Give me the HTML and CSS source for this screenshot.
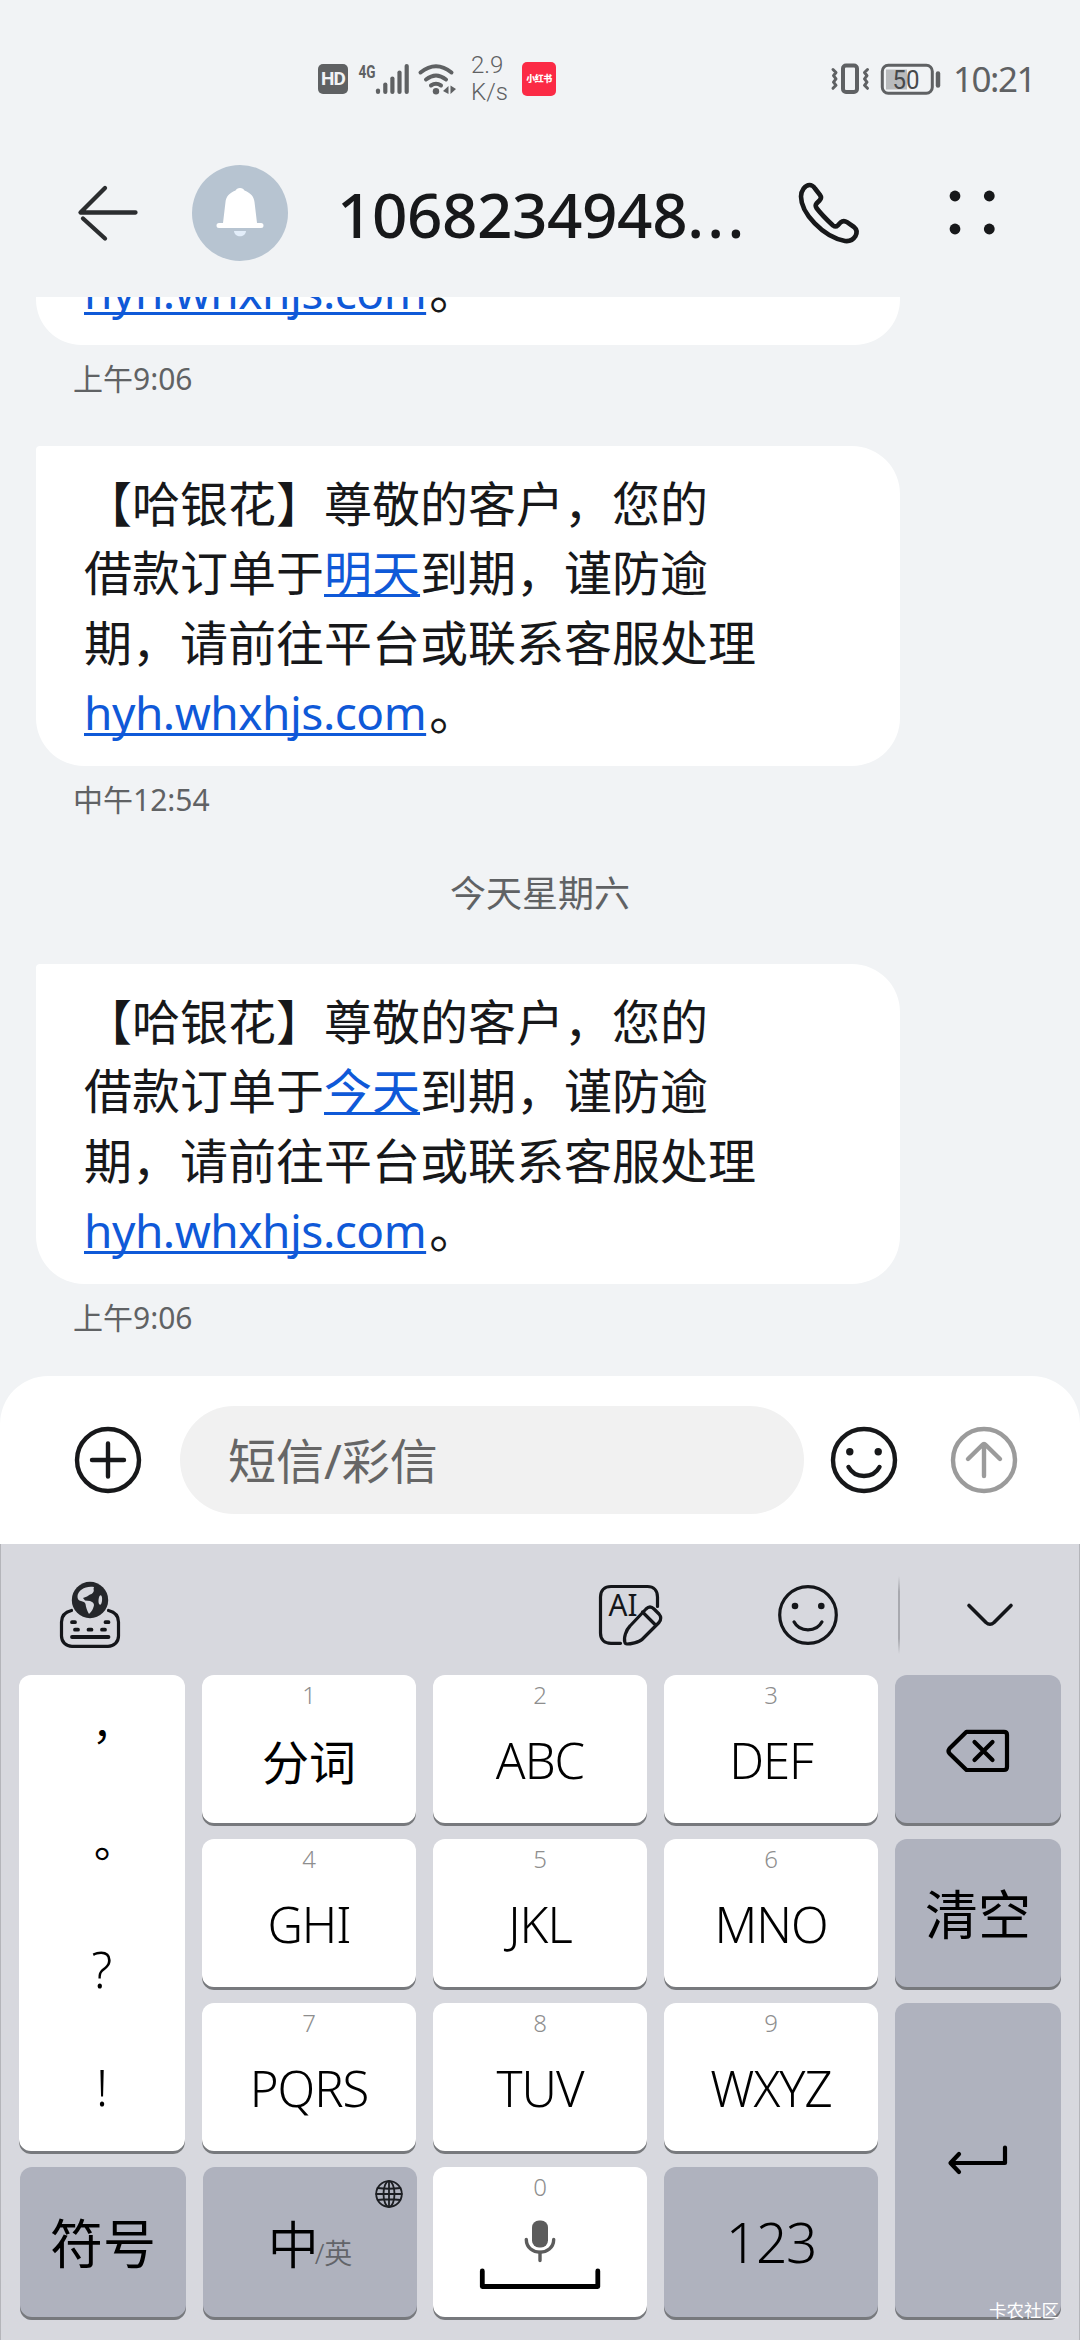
FILE: index.html
```html
<!DOCTYPE html>
<html lang="zh-CN">
<head>
<meta charset="utf-8">
<title>短信</title>
<link rel="stylesheet" href="styles.css">
</head>
<body>
<div class="status">
  <div class="status-left">
    <span class="hd">HD</span>
    <svg class="signal" width="54" height="34" viewBox="357 61 54 34">
      <text class="net" x="358.500" y="76.500" textLength="17" lengthAdjust="spacingAndGlyphs">4G</text>
      <g class="bars"><path d="M378 89.500V91"/><path d="M385.300 83.500V91"/><path d="M392.400 77.500V91"/><path d="M399.500 71.500V91"/><path d="M406.700 65V91"/></g>
    </svg>
    <svg class="wifi" width="40" height="34" viewBox="417 61 40 34">
      <path d="M420.500 71.500Q436 59 451.500 71.500M426 78.500Q436 70.500 446 78.500M431 84.500Q436 81 441 84.500"/>
      <circle cx="436" cy="90.300" r="3.200"/>
      <path class="tri" d="M448.500 85V93L443 90ZM450.500 84.500L456 88L450.500 93Z"/>
    </svg>
    <div class="speed"><span>2.9</span><span>K/s</span></div>
    <span class="redapp">小红书</span>
  </div>
  <div class="status-right">
    <svg width="110" height="34" viewBox="830 61 110 34">
      <rect class="line4" x="842" y="64.500" width="14" height="26.500" rx="3"/>
      <path class="zig" d="M832 68.500l3 3-2.500 3.200 2.500 3.200-2.500 3.200 2.500 3.200-3 3M866.500 68.500l-3 3 2.500 3.200-2.500 3.200 2.500 3.200-2.500 3.200 3 3"/>
      <rect class="fill" x="885" y="68.500" width="21" height="20"/>
      <rect class="line3" x="881.300" y="64.300" width="50" height="28" rx="6"/>
      <path class="nub" d="M937 72.500V84.500"/>
      <text class="pct" x="891.500" y="87.500" textLength="27" lengthAdjust="spacingAndGlyphs">50</text>
    </svg>
    <span class="clock">10:21</span>
  </div>
</div>

<header class="header">
  <svg class="back" width="64" height="60" viewBox="76 183 64 60"><path d="M105 188L80.500 212.500H135.500M83 218.500L105 238.500"/></svg>
  <div class="avatar"><svg width="50" height="54" viewBox="0 0 50 54">
    <path class="bell" d="M25 2C27.500 2 28.500 3 29.500 4.500C36 7 39 11 39.500 16L42 37H46A2.500 2.500 0 0 1 46 42H4A2.500 2.500 0 0 1 4 37H8L10.500 16C11 11 14 7 20.500 4.500C21.500 3 22.500 2 25 2Z"/>
    <path class="clap" d="M19 45H31C30.500 52 19.500 52 19 45Z"/></svg></div>
  <h1 class="title">1068234948<span class="dots">...</span></h1>
  <svg class="phone" width="62" height="62" viewBox="-1 -1 62 62"><path d="M10.500 2C13.500 2 15 4 16 5.500L21 12C22.500 14 22 16 20.500 17.500L17.500 20.500C16.300 22 16.500 23.500 17.500 25C22 31 27 36 34 42.500C36 44 37.500 43.700 38.800 42.400L41.500 39.500C43.500 37.800 46 37.800 48 39.200L55 44C58 46.500 58 50 56.500 53C54 57 50 58.500 46 58C24 54 2 30 2 13.500C2 8 6 2 10.500 2Z"/></svg>
  <svg class="more" width="50" height="50" viewBox="0 0 50 50"><circle cx="8" cy="8" r="5.400"/><circle cx="42.300" cy="8" r="5.400"/><circle cx="8" cy="41" r="5.400"/><circle cx="42.300" cy="41" r="5.400"/></svg>
</header>

<main class="chat">
  <div class="bubble cut"><a class="link url">hyh.whxhjs.com</a>。</div>
  <div class="time">上午9:06</div>
  <div class="bubble">【哈银花】尊敬的客户，您的<br>借款订单于<a class="link">明天</a>到期，谨防逾<br>期，请前往平台或联系客服处理<br><a class="link url">hyh.whxhjs.com</a>。</div>
  <div class="time">中午12:54</div>
  <div class="date">今天星期六</div>
  <div class="bubble">【哈银花】尊敬的客户，您的<br>借款订单于<a class="link">今天</a>到期，谨防逾<br>期，请前往平台或联系客服处理<br><a class="link url">hyh.whxhjs.com</a>。</div>
  <div class="time">上午9:06</div>
</main>

<div class="compose">
  <svg class="ic" width="68" height="68" viewBox="-34 -34 68 68"><circle r="31"/><path d="M-16 0H16M0 -16.500V16.500"/></svg>
  <div class="field">短信/彩信</div>
  <svg class="ic" width="68" height="68" viewBox="-34 -34 68 68"><circle r="31"/><path d="M-15.500 7C-9 19 9 19 15.500 7"/><g class="dot"><circle cx="-14.200" cy="-8.300" r="3.700"/><circle cx="14.200" cy="-8.300" r="3.700"/></g></svg>
  <svg class="ic gray" width="68" height="68" viewBox="-34 -34 68 68"><circle r="31"/><path d="M0 16V-15M-16 -1L-2 -14.800Q0 -16.800 2 -14.800L16 -1"/></svg>
</div>

<div class="keyboard">
  <div class="tools">
    <svg class="tk" width="60" height="68" viewBox="0 -1 60 68">
      <path d="M11.500 28.500C5 30 1.500 34 1.500 40V54C1.500 60 6 64.300 12 64.300H48C54 64.300 58.500 60 58.500 54V40C58.500 34 55 30 48.500 28.500"/>
      <path class="thick" d="M12 40.200H15M45.500 40.200H48.500M15 47.700H18M28.500 47.700H31.500M42 47.700H45M12 55H48.500"/>
      <circle class="globe" cx="30" cy="18" r="18.200"/>
      <path class="land" d="M34 5C26 3.500 18 8 17.500 14C17.300 17 18.500 18.500 21 19C23 19.500 25 20 25.500 22C26 25 27 29 29 32C32 29 33 27 33.500 25C35 22 33 20 30 19L25 18.500L23 16L27 14.500L30 12.500C33 12 34.500 9 33.500 7ZM39.500 14C41.500 12 42.500 15 42 19C41.500 22 40.500 24 39 22C38 20 38.500 16 39.500 14Z"/>
    </svg>
    <svg class="tk ai" width="66" height="62" viewBox="-1 -1 66 62">
      <path d="M58.500 21.500V12C58.500 5.500 54.500 1.500 48.500 1.500H12C5.500 1.500 1.500 5.500 1.500 12V48C1.500 54.500 5.500 58.300 12 58.300H21.500"/>
      <text x="9.500" y="30.500" textLength="29" lengthAdjust="spacingAndGlyphs">AI</text>
      <path d="M25.800 57C24.500 53 27 45 31 41L47 24C50 21 53 22 55 24L60 29C62.500 32 62 35 60 37.500L43 54.500C40 57.500 31 59 28 59C26.500 59 26 58 25.800 57ZM43.500 27L56.500 40"/>
    </svg>
    <svg class="tk face" width="62" height="62" viewBox="-31 -31 62 62"><circle r="28.300"/><path d="M-14 6.800C-8.500 17.500 8.500 17.500 14 6.800"/><g class="dot"><circle cx="-13" cy="-9" r="3.300"/><circle cx="13.300" cy="-9" r="3.300"/></g></svg>
    <div class="sep"></div>
    <svg class="tk chev" width="50" height="28" viewBox="965 1601 50 28"><path d="M969 1605.500L986 1622.500Q990 1626 994 1622.500L1011 1605.500"/></svg>
  </div>
  <div class="keys">
    <div class="key punct"><span class="tc">，</span><span class="tc">。</span><span>?</span><span>!</span></div>
    <div class="key"><i>1</i><b class="cn">分词</b></div>
    <div class="key"><i>2</i><b>ABC</b></div>
    <div class="key"><i>3</i><b>DEF</b></div>
    <div class="key dark"><svg class="kic" width="66" height="46" viewBox="946 1727.500 66 46"><path d="M967.500 1731.300H1005Q1008 1731.300 1008 1734.300V1766.500Q1008 1769.500 1005 1769.500H967.500L950.500 1753Q948.500 1750.500 950.500 1748ZM975.500 1741.500L993.500 1759.500M993.500 1741.500L975.500 1759.500"/></svg></div>
    <div class="key"><i>4</i><b>GHI</b></div>
    <div class="key"><i>5</i><b>JKL</b></div>
    <div class="key"><i>6</i><b>MNO</b></div>
    <div class="key dark"><span class="big">清空</span></div>
    <div class="key"><i>7</i><b>PQRS</b></div>
    <div class="key"><i>8</i><b>TUV</b></div>
    <div class="key"><i>9</i><b>WXYZ</b></div>
    <div class="key dark enter"><svg class="kic" width="64" height="34" viewBox="948 2143 64 34"><path d="M1007 2147.500V2163H953M961 2154L952.500 2163L961 2172"/></svg></div>
    <div class="key dark sym"><span class="big">符号</span></div>
    <div class="key dark lang"><span class="zh">中</span><span class="en">/英</span>
      <svg class="net-globe" width="30" height="30" viewBox="-15 -15 30 30"><circle r="12.800"/><ellipse rx="5.500" ry="12.800"/><path d="M-12.800 0H12.800M-11.500 -6Q0 -4.500 11.500 -6M-11.500 6Q0 4.500 11.500 6M0 -12.800V12.800"/></svg></div>
    <div class="key space"><i>0</i>
      <svg width="124" height="76" viewBox="478 2217 124 76">
        <rect class="mic" x="532" y="2220.500" width="16" height="27" rx="7"/>
        <path class="micl" d="M526.300 2239.500C526.500 2256.500 553.500 2256.500 553.700 2239.500M540 2252V2260.500"/>
        <path class="brk" d="M482.300 2271V2286.500H597.800V2271"/>
      </svg></div>
    <div class="key dark"><span class="num">123</span></div>
  </div>
  <div class="mark">卡农社区</div>
</div>
</body>
</html>
```
FILE: styles.css
```css
* { box-sizing: border-box; }
body {
  margin: 0;
  width: 1080px;
  height: 2340px;
  overflow: hidden;
  display: flex;
  flex-direction: column;
  background: #f1f3f5;
  color: #17181a;
  font-family: "Noto Sans", "Noto Sans CJK SC", sans-serif;
}
svg { display: block; flex: none; overflow: visible; }
svg path, svg circle, svg rect, svg ellipse { fill: none; stroke-linecap: round; stroke-linejoin: round; }

/* status bar */
.status { height: 128px; padding: 51px 49px 0 318px; display: flex; justify-content: space-between; align-items: flex-start; color: #5f6163; }
.status-left, .status-right { display: flex; height: 55px; align-items: center; }
.hd { width: 30px; height: 30px; border-radius: 5px; background: #5f6163; color: #f1f3f5; font: 700 19px/30px Roboto, sans-serif; text-align: center; letter-spacing: -1px; }
.signal { margin-left: 9px; }
.net { font: 700 19px Roboto, sans-serif; fill: #5f6163; }
.bars path { stroke: #5f6163; stroke-width: 4.200; }
.wifi { margin-left: 6px; }
.wifi path { stroke: #5f6163; stroke-width: 4; }
.wifi circle { fill: #5f6163; }
.wifi .tri { fill: #5f6163; stroke: none; }
.speed { width: 50px; margin-left: 14px; display: flex; flex-direction: column; font: 300 24px/27px Roboto, sans-serif; }
.redapp { width: 34px; height: 34px; border-radius: 5px; margin-left: 1px; background: #fb2a45; color: #fff; font: 900 9px/34px "Noto Sans CJK SC", sans-serif; text-align: center; letter-spacing: -.5px; }
.line4 { stroke: #5f6163; stroke-width: 4; }
.line3 { stroke: #5f6163; stroke-width: 3; }
.zig { stroke: #5f6163; stroke-width: 3; }
.fill { fill: #b9bbbd !important; }
.nub { stroke: #5f6163; stroke-width: 4.500; }
.pct { font: 400 26px Roboto, sans-serif; fill: #47494b; }
.clock { width: 78px; margin-left: 12px; font-size: 35px; line-height: 55px; letter-spacing: -1.500px; white-space: nowrap; }

/* header */
.header { height: 169px; padding: 0 83px 0 76px; display: flex; align-items: center; }
.back path { stroke: #2b2d2f; stroke-width: 4.300; }
.avatar { width: 96px; height: 96px; margin-left: 52px; border-radius: 50%; background: #b7c4d1; display: flex; align-items: center; justify-content: center; }
.bell { fill: #fff !important; }
.clap { fill: #e3eefa !important; }
.title { width: 411px; margin: 2px 0 0 49px; font-size: 62px; line-height: 80px; font-weight: 500; letter-spacing: -.450px; white-space: nowrap; }
.dots { letter-spacing: 3.300px; }
.phone { margin-left: 50px; }
.phone path { stroke: #17181a; stroke-width: 4.600; }
.more { margin-left: 87px; }
.more circle { fill: #17181a; }

/* messages */
.chat { height: 1079px; overflow: hidden; display: flex; flex-direction: column; justify-content: flex-end; padding: 0 36px 40px; }
.bubble { flex: none; width: 864px; height: 320px; padding: 21px 48px; border-radius: 4px 48px 48px 48px; background: #fff; font-size: 48px; line-height: 69.300px; white-space: nowrap; font-family: "Noto Sans CJK SC", sans-serif; }
.bubble.cut { height: 91px; padding-top: 0; }
.link { color: #0f59d8; text-decoration: underline; text-decoration-thickness: 2.500px; text-underline-offset: 3px; text-decoration-skip-ink: none; }
.url { margin-right: 3px; font-family: "Noto Sans", sans-serif; font-size: 46px; letter-spacing: -.500px; line-height: 1; }
.time { flex: none; margin: 14px 0 47px 37px; font-size: 30px; line-height: 40px; color: #606264; letter-spacing: 0; }
.time:last-child { margin-bottom: -2px; }
.date { flex: none; margin: 2px 0 45px; text-align: center; font-size: 36px; line-height: 50px; color: #606264; }

/* compose bar */
.compose { height: 168px; padding: 0 62px 0 74px; display: flex; align-items: center; background: #fff; border-radius: 48px 48px 0 0; }
.ic circle, .ic path { stroke: #17181a; stroke-width: 4.400; }
.ic .dot circle { fill: #17181a; stroke: none; }
.gray { margin-left: 52px; }
.ic.gray circle, .ic.gray path { stroke: #9b9b9b; }
.field { width: 624px; height: 108px; margin: 0 26px 0 38px; padding-left: 48px; border-radius: 54px; background: #f1f1f1; color: #666; font-size: 48px; line-height: 109px; }

/* keyboard */
.keyboard { position: relative; height: 796px; background: #d7d8de; border: solid #b4b5ba; border-width: 0 1px; }
.tools { height: 131px; padding: 10px 64px 0 59px; display: flex; align-items: center; }
.tk path, .tk circle { stroke: #14161a; stroke-width: 3.200; }
.tk .thick { stroke-width: 3.800; }
.tk .globe { fill: #25272b; stroke: none; }
.tk .land { fill: #d7d8de; stroke: none; }
.tk .dot circle { fill: #14161a; stroke: none; }
.tk text { font: 400 31px "Noto Sans", sans-serif; fill: #14161a; }
.ai { margin-left: 478px; }
.face { margin-left: 113px; }
.sep { width: 3px; height: 78px; margin-left: 59px; background: linear-gradient(rgba(165,166,172,0), #a8a9af 20%, #a8a9af 80%, rgba(165,166,172,0)); }
.chev { margin-left: 65px; }
.chev path { stroke-width: 3.600; }
.keys { display: grid; grid-template-columns: 166px 214px 214px 214px 166px; grid-template-rows: 151px 151px 151px 153px; gap: 13px 17px; padding-left: 18px; }
.key { display: flex; flex-direction: column; align-items: center; background: #fff; border-radius: 12px; box-shadow: inset 0 -3px #77797d; color: #000; }
.key i { font-style: normal; font-size: 24px; line-height: 34px; height: 34px; margin-top: 3px; color: #8e8e8e; font-weight: 350; }
.key b { font-weight: 350; font-size: 49px; line-height: 70px; margin-top: 13px; letter-spacing: -1px; }
.key b.cn { font-family: "Noto Sans CJK SC", sans-serif; font-weight: 400; font-size: 47px; letter-spacing: 0; }
.dark { background: #afb2be; justify-content: center; }
.punct { grid-row: span 3; justify-content: space-around; padding-bottom: 8px; font-size: 49px; line-height: 70px; font-weight: 350; }
.punct .tc { font-family: "Noto Sans CJK TC", sans-serif; font-weight: 400; font-size: 42px; }
.big { font-size: 53px; line-height: 80px; }
.enter { grid-row: span 2; padding-bottom: 4px; }
.kic path { stroke: #000; stroke-width: 4.200; }
.sym { margin: 0 -1px 0 1px; }
.lang { position: relative; flex-direction: row; align-items: baseline; margin: 0 -1px 0 1px; padding-top: 37px; font-weight: 350; }
.zh { font-size: 51px; line-height: 80px; font-weight: 350; }
.en { font-size: 28px; color: #626469; margin-left: -4px; }
.net-globe { position: absolute; top: 12px; right: 13px; }
.net-globe * { stroke: #1c1e22; stroke-width: 1.800; }
.space svg { margin-top: 13px; }
.mic { fill: #5c5c5c !important; }
.micl { stroke: #5c5c5c; stroke-width: 3.400; }
.brk { stroke: #000; stroke-width: 4.800; }
.num { font-size: 55px; line-height: 76px; padding-bottom: 4px; letter-spacing: -1.300px; font-weight: 350; }
.mark { position: absolute; right: 20px; bottom: 17px; color: #fff; font-size: 17.500px; line-height: 26px; }
```
